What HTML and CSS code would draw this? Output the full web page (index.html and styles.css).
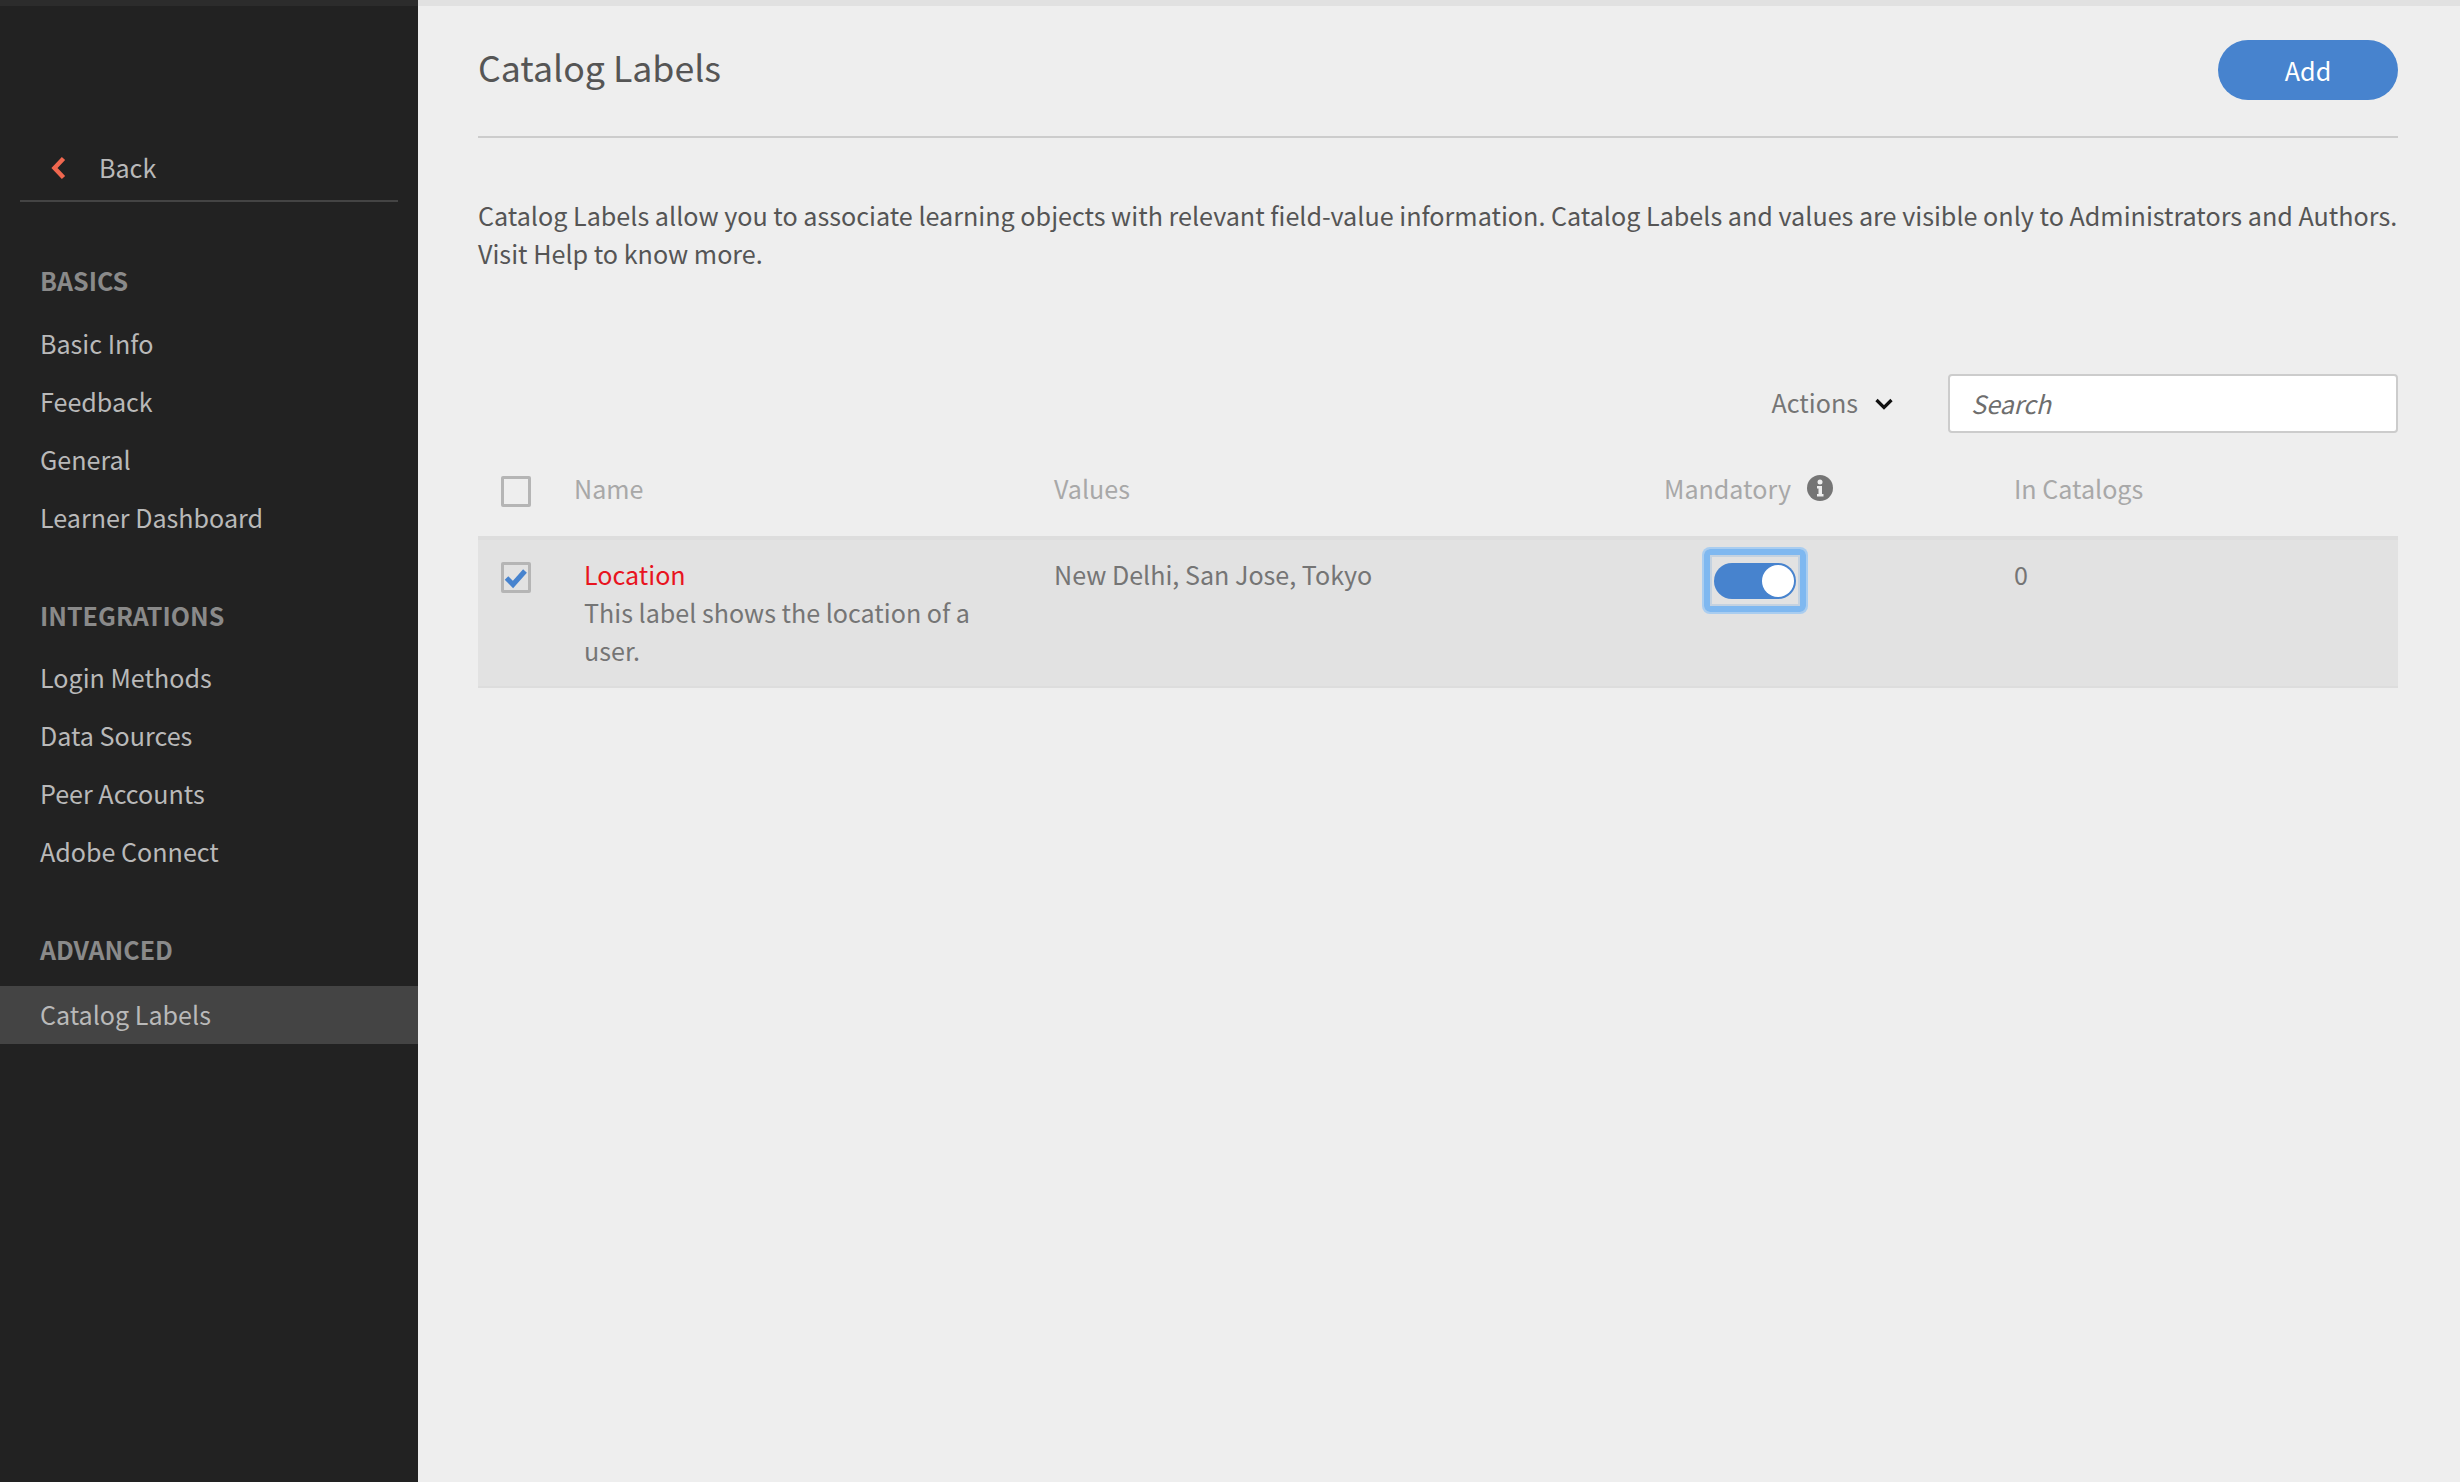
FILE: index.html
```html
<!DOCTYPE html>
<html lang="en">
<head>
    <meta charset="UTF-8">
    <meta name="viewport" content="width=device-width, initial-scale=1.0">
    <title>Catalog Labels</title>
    <link rel="stylesheet" href="styles.css">
</head>
<body>
    <aside class="sidebar">
        <a class="back-link" href="#">
            <svg class="back-icon" width="16" height="24" viewBox="0 0 16 24"><path d="M13.500 2.500 4.500 12l9 9.500" fill="none" stroke="#f0674f" stroke-width="4.500"/></svg>
            <span>Back</span>
        </a>
        <h3 class="nav-heading first">BASICS</h3>
        <a class="nav-item" href="#">Basic Info</a>
        <a class="nav-item" href="#">Feedback</a>
        <a class="nav-item" href="#">General</a>
        <a class="nav-item" href="#">Learner Dashboard</a>
        <h3 class="nav-heading">INTEGRATIONS</h3>
        <a class="nav-item" href="#">Login Methods</a>
        <a class="nav-item" href="#">Data Sources</a>
        <a class="nav-item" href="#">Peer Accounts</a>
        <a class="nav-item" href="#">Adobe Connect</a>
        <h3 class="nav-heading">ADVANCED</h3>
        <a class="nav-item active" href="#">Catalog Labels</a>
    </aside>
    <main class="content">
        <header class="page-header">
            <h1>Catalog Labels</h1>
            <button class="add-btn">Add</button>
        </header>
        <p class="intro">Catalog Labels allow you to associate learning objects with relevant field-value information. Catalog Labels and values are visible only to Administrators and Authors. Visit Help to know more.</p>
        <div class="toolbar">
            <div class="actions">
                <span>Actions</span>
                <svg width="18" height="12" viewBox="0 0 18 12"><path d="M1.500 2 9 9.500 16.500 2" fill="none" stroke="#111" stroke-width="3.200"/></svg>
            </div>
            <div class="search">Search</div>
        </div>
        <div class="table-row table-head">
            <div class="cell-check"><span class="checkbox"></span></div>
            <div>Name</div>
            <div>Values</div>
            <div class="mandatory-head">
                <span>Mandatory</span>
                <svg width="26" height="26" viewBox="0 0 26 26"><circle cx="13" cy="13" r="13" fill="#757575"/><circle cx="13" cy="7" r="2.500" fill="#eee"/><path d="M10 11h5v8h1.500v2.500h-6.500V19H11.500v-5.500H10z" fill="#eee"/></svg>
            </div>
            <div>In Catalogs</div>
        </div>
        <div class="table-row label-row">
            <div class="cell-check">
                <span class="checkbox">
                    <svg width="24" height="24" viewBox="0 0 24 24"><path d="M2.500 12l6.500 6.500L21 5" fill="none" stroke="#4783ce" stroke-width="5"/></svg>
                </span>
            </div>
            <div class="label-name">
                <a href="#">Location</a>
                <p>This label shows the location of a user.</p>
            </div>
            <div>New Delhi, San Jose, Tokyo</div>
            <div>
                <div class="toggle-focus">
                    <span class="toggle"><span class="knob"></span></span>
                </div>
            </div>
            <div>0</div>
        </div>
    </main>
</body>
</html>
```

FILE: styles.css
```css
body {
    font-family: "Noto Sans CJK SC", "Noto Sans", sans-serif;
    margin: 0;
    padding: 0;
    display: flex;
    min-height: 100vh;
    background-color: #eeeeee;
    font-size: 25.100px;
    line-height: 38px;
    color: #555555;
    overflow: hidden;
}
a {
    text-decoration: none;
}
.sidebar {
    width: 418px;
    flex-shrink: 0;
    box-sizing: border-box;
    background-color: #222222;
    border-top: 6px solid #2c2c2c;
}
.back-link {
    display: flex;
    align-items: center;
    gap: 33px;
    height: 64px;
    margin: 130px 20px 0;
    padding-left: 30px;
    border-bottom: 2px solid #444444;
    color: #b9b9b9;
}
.back-link span {
    margin-top: -2px;
}
.nav-heading {
    margin: 40px 0 4px;
    padding-left: 40px;
    font-size: 25px;
    line-height: 58px;
    font-weight: 700;
    color: #8a8a8a;
}
.nav-heading.first {
    margin: 49px 0 5px;
}
.nav-item {
    display: block;
    padding-left: 40px;
    line-height: 58px;
    color: #b9b9b9;
}
.nav-item.active {
    background-color: #444444;
    margin-top: 8px;
    line-height: 56px;
    padding-bottom: 2px;
}
.content {
    flex-grow: 1;
    min-width: 0;
    padding: 0 62px 0 60px;
    border-top: 6px solid #e1e1e1;
}
.page-header {
    display: flex;
    justify-content: space-between;
    padding: 34px 0 36px;
    border-bottom: 2px solid #cccccc;
}
.page-header h1 {
    margin: 0;
    font-size: 35.700px;
    line-height: 54px;
    font-weight: 400;
}
.add-btn {
    width: 180px;
    height: 60px;
    border: none;
    border-radius: 30px;
    background-color: #4783ce;
    color: white;
    font-family: inherit;
    font-size: 25.100px;
}
.intro {
    margin: 58px 0 0;
    font-size: 25.150px;
}
.toolbar {
    display: flex;
    align-items: center;
    justify-content: flex-end;
    gap: 55px;
    margin-top: 102px;
}
.actions {
    display: flex;
    align-items: center;
    gap: 17px;
    color: #757575;
}
.actions span {
    margin-top: -3px;
}
.search {
    box-sizing: border-box;
    width: 450px;
    height: 59px;
    padding: 8px 21px;
    border: 2px solid #cccccc;
    border-radius: 4px;
    background-color: white;
    font-style: italic;
    color: #6e6e6e;
}
.table-row {
    display: grid;
    grid-template-columns: 96px 480px 610px 350px 1fr;
    align-items: start;
}
.table-head {
    height: 67px;
    padding-top: 36px;
    color: #a8a8a8;
}
.mandatory-head {
    display: flex;
    align-items: center;
    gap: 16px;
}
.cell-check {
    padding-left: 23px;
}
.checkbox {
    display: flex;
    align-items: center;
    justify-content: center;
    box-sizing: border-box;
    width: 30px;
    height: 31px;
    margin-top: 7px;
    border: 3px solid #b5b5b5;
    border-radius: 2px;
}
.label-row {
    padding: 15px 0 17px;
    border-top: 4px solid #dddddd;
    border-bottom: 2px solid #dddddd;
    background-color: #e2e2e2;
    color: #757575;
}
.label-name {
    padding: 0 60px 0 10px;
}
.label-name a {
    color: #e8141f;
}
.label-name p {
    margin: 0;
}
.toggle-focus {
    display: flex;
    align-items: center;
    justify-content: center;
    box-sizing: border-box;
    width: 102px;
    height: 63px;
    margin: -6px 0 0 40px;
    border: 6px solid #7fb8f0;
    border-radius: 6px;
    box-shadow: 0 0 0 2px #a9cdf0, inset 0 0 0 2px #c4d2e0;
}
.toggle {
    display: flex;
    justify-content: flex-end;
    align-items: center;
    box-sizing: border-box;
    width: 82px;
    height: 36px;
    padding-right: 2px;
    border-radius: 18px;
    background-color: #4783ce;
}
.knob {
    width: 32px;
    height: 32px;
    border-radius: 50%;
    background-color: white;
}
```
